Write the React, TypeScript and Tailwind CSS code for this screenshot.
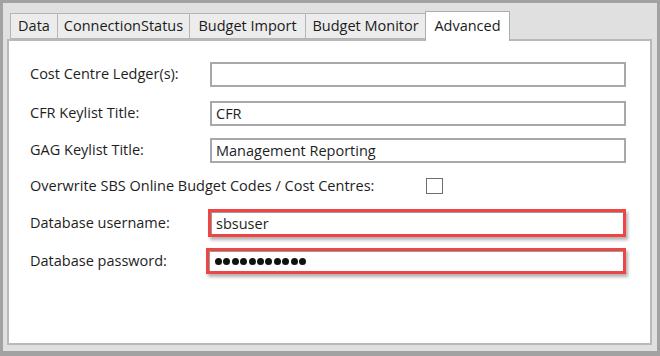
import React from "react";

const font = { fontFamily: '"Open Sans", "Noto Sans", sans-serif' };

function Tab({ label, w, selected }: { label: string; w: string; selected?: boolean }) {
  if (selected) {
    return (
      <div
        className={`relative z-10 -mb-[2px] h-[30px] ${w} border border-b-0 border-[#acacac] bg-white flex items-start justify-center pt-[3px] text-[14.5px] text-[#1b1b1b]`}
      >
        {label}
      </div>
    );
  }
  return (
    <div
      className={`h-[26px] ${w} -mr-[1px] border border-[#b5b5b5] bg-[#ececec] flex items-center justify-center text-[14.5px] text-[#1b1b1b]`}
    >
      {label}
    </div>
  );
}

function Label({ children }: { children: React.ReactNode }) {
  return <div className="w-[180px] shrink-0 text-[14.5px] text-[#1e1e1e] leading-none">{children}</div>;
}

function TextBox({ value }: { value?: string }) {
  return (
    <div className="w-[416px] h-[25px] border-2 border-[#a8a8a8] bg-white flex items-center pl-[4px] text-[14.5px] text-[#1e1e1e]">
      {value}
    </div>
  );
}

export default function App() {
  return (
    <div
      style={font}
      className="w-[660px] h-[356px] border-[3px] border-b-[5px] border-[#a2a2a2] bg-[#e0e0e0] flex flex-col pl-[4px] pr-[5px] pt-[8px]"
    >
      <div className="flex items-end pl-[3px]">
        <Tab label="Data" w="w-[48px]" />
        <Tab label="ConnectionStatus" w="w-[133px]" />
        <Tab label="Budget Import" w="w-[117px]" />
        <Tab label="Budget Monitor" w="w-[121px]" />
        <Tab label="Advanced" w="w-[85px]" selected />
      </div>
      <div className="w-[645px] h-[306px] border-2 border-[#b9b9b9] bg-white flex flex-col pl-[21px]">
        <div className="mt-[21px] flex items-center h-[25px]">
          <Label>Cost Centre Ledger(s):</Label>
          <TextBox />
        </div>
        <div className="mt-[14px] flex items-center h-[25px]">
          <Label>CFR Keylist Title:</Label>
          <TextBox value="CFR" />
        </div>
        <div className="mt-[12px] flex items-center h-[25px]">
          <Label>GAG Keylist Title:</Label>
          <TextBox value="Management Reporting" />
        </div>
        <div className="mt-[15px] flex items-center h-[16px]">
          <div className="w-[396px] shrink-0 text-[14.5px] text-[#1e1e1e] leading-none">
            Overwrite SBS Online Budget Codes / Cost Centres:
          </div>
          <div className="w-[17px] h-[16px] border border-[#6e6e6e] bg-white" />
        </div>
        <div className="mt-[15px] flex items-center h-[28px]">
          <Label>Database username:</Label>
          <div className="-ml-[2px] w-[418px] h-[28px] border-[3px] border-[#f04545] shadow-[2px_3px_3px_rgba(0,0,0,0.3)] bg-white flex">
            <div className="flex-1 border-t border-l border-[#9a9a9a] flex items-center pl-[4px] text-[14.5px] text-[#1e1e1e]">
              sbsuser
            </div>
          </div>
        </div>
        <div className="mt-[11px] flex items-center h-[26px]">
          <Label>Database password:</Label>
          <div className="-ml-[4px] w-[420px] h-[26px] border-[3px] border-[#f04545] shadow-[2px_3px_3px_rgba(0,0,0,0.3)] bg-white flex">
            <div className="flex-1 border-t border-l border-[#9a9a9a] flex items-center pl-[5px] gap-[1.4px]">
              {Array.from({ length: 11 }).map((_, i) => (
                <div key={i} className="w-[7px] h-[7px] rounded-full bg-[#111]" />
              ))}
            </div>
          </div>
        </div>
      </div>
    </div>
  );
}
